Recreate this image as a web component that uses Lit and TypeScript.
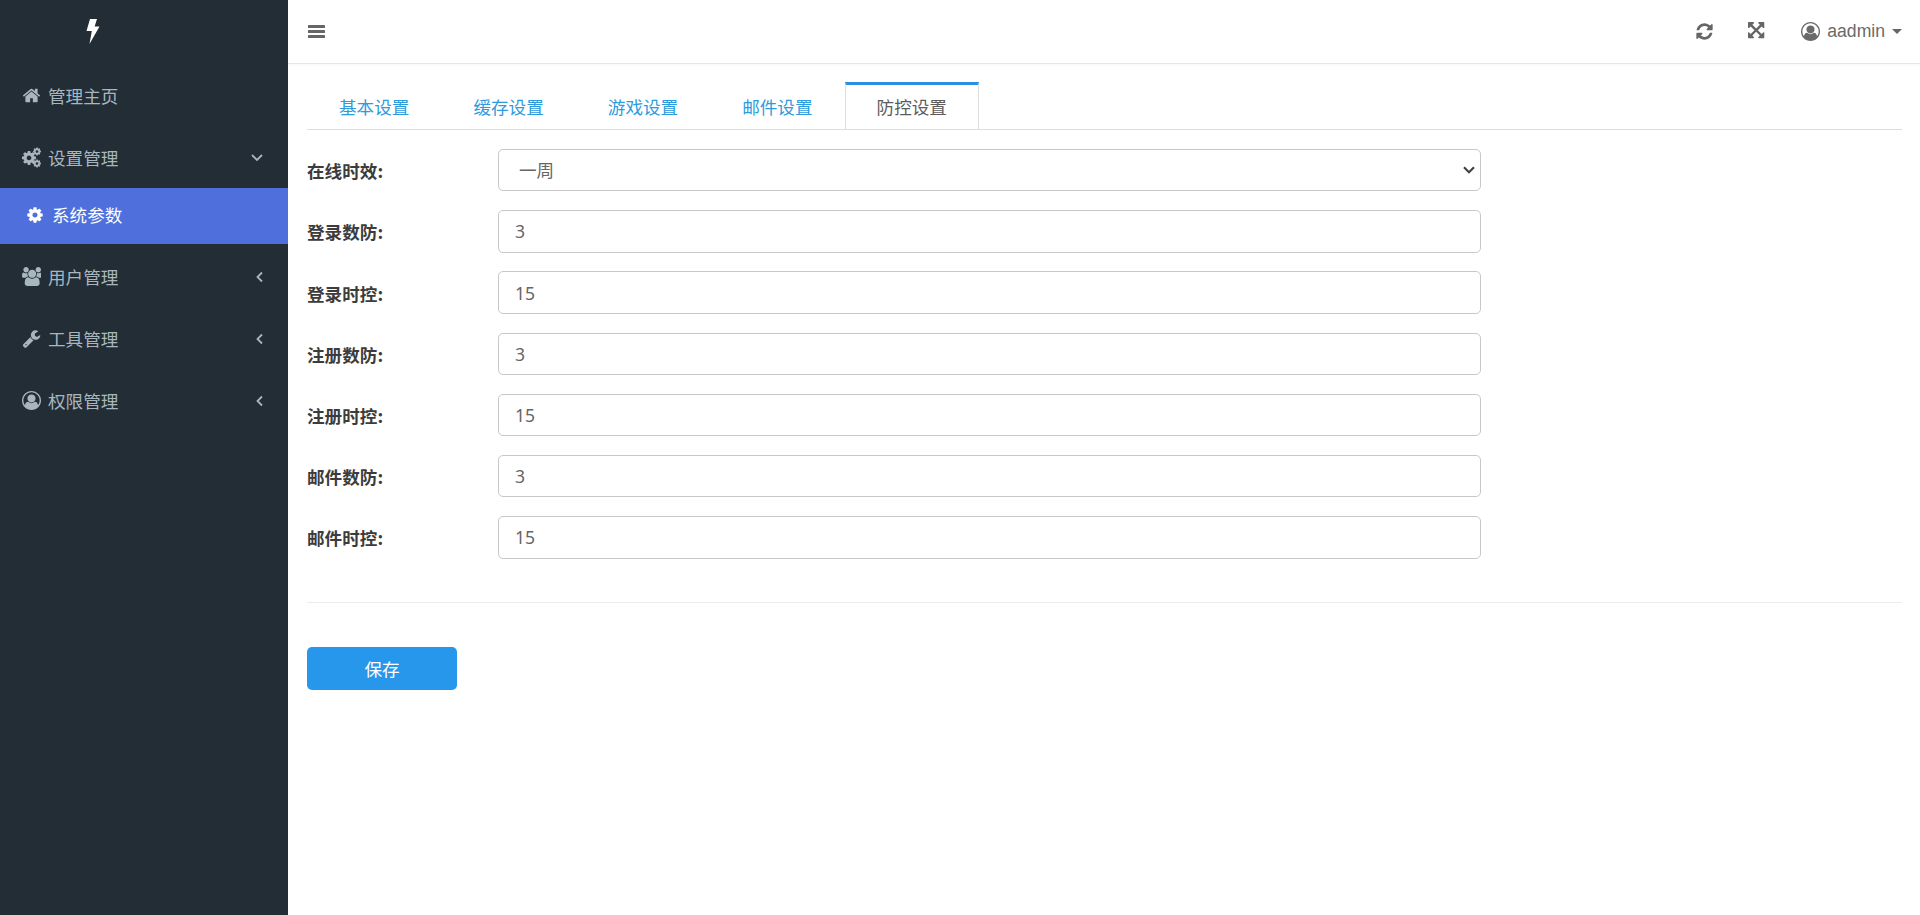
import { LitElement, html, css, svg } from "lit";
import { customElement, state } from "lit/decorators.js";

const P = {
  home: "M1472 992v480q0 26-19 45t-45 19h-384v-384h-256v384h-384q-26 0-45-19t-19-45v-480q0-1 .5-3t.5-3l575-474 575 474q1 2 1 6zm223-69l-62 74q-8 9-21 11h-3q-13 0-21-7l-692-577-692 577q-12 8-24 7-13-2-21-11l-62-74q-8-10-7-23.5t11-21.5l719-599q32-26 76-26t76 26l244 204v-195q0-14 9-23t23-9h192q14 0 23 9t9 23v408l219 182q10 8 11 21.5t-7 23.5z",
  cog: "M1152 896q0-106-75-181t-181-75-181 75-75 181 75 181 181 75 181-75 75-181zm512-109v222q0 12-8 23t-20 13l-185 28q-19 54-39 91 35 50 107 138 10 12 10 25t-9 23q-27 37-99 108t-94 71q-12 0-26-9l-138-108q-44 23-91 38-16 136-29 186-7 28-36 28h-222q-14 0-24.5-8.5t-11.5-21.5l-28-184q-49-16-90-37l-141 107q-10 9-25 9-14 0-25-11-126-114-165-168-7-10-7-23 0-12 8-23 15-21 51-66.5t54-70.5q-27-50-41-99l-183-27q-13-2-21-12.5t-8-23.5v-222q0-12 8-23t19-13l186-28q14-46 39-92-40-57-107-138-10-12-10-24 0-10 9-23 26-36 98.5-107.5t94.5-71.5q13 0 26 10l138 107q44-23 91-38 16-136 29-186 7-28 36-28h222q14 0 24.5 8.5t11.5 21.5l28 184q49 16 90 37l142-107q9-9 24-9 13 0 25 10 129 119 165 170 7 8 7 22 0 12-8 23-15 21-51 66.5t-54 70.5q26 50 41 98l183 28q13 2 21 12.5t8 23.5z",
  users: "M593 896q-162 5-265 128h-134q-82 0-138-40.5t-56-118.5q0-353 124-353 6 0 43.5 21t97.5 42.5 119 21.5q67 0 133-23-5 37-5 66 0 139 81 256zm1071 637q0 120-73 189.5t-194 69.5h-874q-121 0-194-69.5t-73-189.5q0-53 3.5-103.5t14-109 26.5-108.5 43-97.5 62-81 85.5-53.5 111.5-20q10 0 43 21.5t73 48 107 48 135 21.5 135-21.5 107-48 73-48 43-21.5q61 0 111.5 20t85.5 53.5 62 81 43 97.5 26.5 108.5 14 109 3.5 103.5zm-1024-1277q0 106-75 181t-181 75-181-75-75-181 75-181 181-75 181 75 75 181zm704 384q0 159-112.5 271.5t-271.5 112.5-271.5-112.5-112.5-271.5 112.5-271.5 271.5-112.5 271.5 112.5 112.5 271.5zm576 225q0 78-56 118.5t-138 40.5h-134q-103-123-265-128 81-117 81-256 0-29-5-66 66 23 133 23 59 0 119-21.5t97.5-42.5 43.5-21q124 0 124 353zm-128-609q0 106-75 181t-181 75-181-75-75-181 75-181 181-75 181 75 75 181z",
  wrench: "M448 1472q0-26-19-45t-45-19-45 19-19 45 19 45 45 19 45-19 19-45zm644-420l-682 682q-37 37-90 37-52 0-91-37l-106-108q-38-36-38-90 0-53 38-91l681-681q39 98 114.5 173.5t173.5 114.5zm634-435q0 39-23 106-47 134-164.5 217.5t-258.5 83.5q-185 0-316.5-131.5t-131.5-316.5 131.5-316.5 316.5-131.5q58 0 121.5 16.5t107.5 46.5q16 11 16 28t-16 28l-293 169v224l193 107q5-3 79-48.5t135.5-81 70.5-35.5q15 0 23.5 10t8.5 25z",
  user: "M896 0q182 0 348 71t286 191 191 286 71 348q0 181-70.5 347t-190.5 286-286 191.5-349 71.5-349-71-285.5-191.5-190.5-286-71-347.5 71-348 191-286 286-191 348-71zm619 1351q149-205 149-455 0-156-61-298t-164-245-245-164-298-61-298 61-245 164-164 245-61 298q0 250 149 455 66-327 306-327 131 128 313 128t313-128q240 0 306 327zm-235-647q0-159-112.5-271.5t-271.5-112.5-271.5 112.5-112.5 271.5 112.5 271.5 271.5 112.5 271.5-112.5 112.5-271.5z",
  refresh: "M1639 1056q0 5-1 7-64 268-268 434.5t-478 166.5q-146 0-282.5-55t-243.5-157l-129 129q-19 19-45 19t-45-19-19-45v-448q0-26 19-45t45-19h448q26 0 45 19t19 45-19 45l-137 137q71 66 161 102t187 36q134 0 250-65t186-179q11-17 53-117 8-23 30-23h192q13 0 22.5 9.5t9.5 22.5zm25-800v448q0 26-19 45t-45 19h-448q-26 0-45-19t-19-45 19-45l138-138q-148-137-349-137-134 0-250 65t-186 179q-11 17-53 117-8 23-30 23h-199q-13 0-22.5-9.5t-9.5-22.5v-7q65-268 270-434.5t480-166.5q146 0 284 55.5t245 156.5l130-129q19-19 45-19t45 19 19 45z",
  expand: "M1283 413l-355 355 355 355 144-144q29-31 70-14 39 17 39 59v448q0 26-19 45t-45 19h-448q-42 0-59-40-17-39 14-69l144-144-355-355-355 355 144 144q31 30 14 69-17 40-59 40h-448q-26 0-45-19t-19-45v-448q0-42 40-59 39-17 69 14l144 144 355-355-355-355-144 144q-19 19-45 19-12 0-24-5-40-17-40-59v-448q0-26 19-45t45-19h448q42 0 59 40 17 39-14 69l-144 144 355 355 355-355-144-144q-31-30-14-69 17-40 59-40h448q26 0 45 19t19 45v448q0 42-39 59-13 5-25 5-26 0-45-19z",
};

const icon = (d: string, cls = "ic") =>
  html`<svg class=${cls} viewBox="0 0 1792 1792" fill="currentColor"><path d=${d}></path></svg>`;

const cogs = html`<svg class="ic" viewBox="0 0 1792 1792" fill="currentColor" overflow="visible">
  ${svg`<path transform="translate(-110 165) scale(.86)" d=${P.cog}></path>
  <path transform="translate(976 -109) scale(.49)" d=${P.cog}></path>
  <path transform="translate(976 1023) scale(.49)" d=${P.cog}></path>`}
</svg>`;

const NAV = [
  { label: "管理主页", icon: icon(P.home), arrow: "" },
  { label: "设置管理", icon: cogs, arrow: "down" },
  { label: "系统参数", icon: icon(P.cog), arrow: "", active: true },
  { label: "用户管理", icon: icon(P.users), arrow: "left" },
  { label: "工具管理", icon: icon(P.wrench), arrow: "left" },
  { label: "权限管理", icon: icon(P.user), arrow: "left" },
];

const TABS = ["基本设置", "缓存设置", "游戏设置", "邮件设置", "防控设置"];
const FIELDS = [
  ["登录数防", "3"],
  ["登录时控", "15"],
  ["注册数防", "3"],
  ["注册时控", "15"],
  ["邮件数防", "3"],
  ["邮件时控", "15"],
];

@customElement("app-root")
export class AppRoot extends LitElement {
  @state() tab = 4;

  static styles = css`
    :host {
      display: flex;
      min-height: 915px;
      font-family: "Noto Sans CJK SC", "Liberation Sans", sans-serif;
      font-size: 17.6px;
      color: #505050;
      background: #fff;
    }
    .side {
      flex: 0 0 288px;
      background: #222d35;
      color: #a8b6bf;
    }
    .logo {
      height: 64px;
      display: flex;
      align-items: center;
      padding-left: 85px;
      color: #fff;
    }
    .logo svg { width: 15px; height: 25px; margin-top: -1px; }
    .nav {
      display: flex;
      align-items: center;
      height: 62px;
      padding: 1px 0 0 22px;
      box-sizing: border-box;
    }
    .nav .ic { width: 19px; height: 19px; margin-right: 7px; flex: none; }
    .nav .lb { flex: 1; line-height: 1; }
    .nav svg.ar { width: 10px; height: 12px; fill: none; stroke: currentColor; stroke-width: 1.8; flex: none; margin-right: 23px; }
    .nav svg.ar.down { width: 14px; height: 10px; margin-right: 24px; }
    .nav.active {
      height: 56px;
      padding: 0 0 2px 26px;
      background: #4e6fdc;
      color: #fff;
      margin-bottom: 1px;
    }
    .nav.active .ic { width: 18px; height: 18px; margin-right: 8px; }
    .main { flex: 1; min-width: 0; }
    .top {
      height: 63px;
      border-bottom: 1px solid #e6e6e6;
      display: flex;
      align-items: center;
      padding: 0 18px 0 20px;
      color: #666;
      box-shadow: 0 1px 2px rgba(0, 0, 0, 0.03);
    }
    .top .bars { width: 17px; height: 17px; margin-right: auto; }
    .top .ic { width: 19px; height: 19px; }
    .top .act { margin-right: 34px; display: flex; }
    .user { display: flex; align-items: center; color: #6a6a6a; font-family: "Liberation Sans", sans-serif; font-size: 17.6px; }
    .user .ic { margin-right: 7px; }
    .caret { width: 0; height: 0; border: 5.5px solid transparent; border-top-color: #666; border-bottom: 0; margin-left: 7px; }
    .content { padding: 18px 18px 0 19px; }
    .tabs { display: flex; border-bottom: 1px solid #dedede; height: 47px; box-sizing: content-box; }
    .tab {
      width: 134.4px;
      box-sizing: border-box;
      display: flex;
      align-items: center;
      justify-content: center;
      color: #2d9bdc;
      padding-bottom: 1px;
      padding-top: 2px;
    }
    .tab.on {
      color: #5c5c5c;
      border: 1px solid #dedede;
      border-top: 3px solid #2b90e0;
      border-bottom: 0;
      padding-top: 0;
      background: #fff;
    }
    form { display: block; padding-top: 19px; }
    .row { display: flex; align-items: center; height: 42.4px; margin-bottom: 18.8px; }
    .row label { flex: 0 0 191px; font-weight: 700; color: #3c3c3c; padding-top: 1px; }
    .row.first label { padding-top: 0; }
    .ctl {
      width: 983px;
      height: 42.4px;
      box-sizing: border-box;
      border: 1px solid #c8c8c8;
      border-radius: 5px;
      background: #fff;
      color: #666;
      padding: 0 16px;
      font: inherit;
      font-family: "Noto Sans", "Noto Sans CJK SC", sans-serif;
      outline: none;
    }
    select.ctl {
      font-family: "Noto Sans CJK SC", sans-serif;
      appearance: none;
      padding: 0 16px 2px 20px;
      background: #fff url("data:image/svg+xml,%3Csvg xmlns='http://www.w3.org/2000/svg' width='12' height='8'%3E%3Cpath d='M1 1.2l5 5 5-5' fill='none' stroke='%23444' stroke-width='2.2'/%3E%3C/svg%3E") no-repeat right 5px center;
    }
    hr { border: 0; border-top: 1px solid #ececec; margin: 43px 0 44px; }
    .save {
      display: block;
      width: 150px;
      height: 43px;
      border: 0;
      border-radius: 5px;
      background: #2797ec;
      color: #fff;
      font: inherit;
      padding: 0;
    }
  `;

  render() {
    return html`
      <aside class="side">
        <div class="logo">
          <svg viewBox="0 0 15 25" fill="currentColor"><path d="M5 0H12L9.6 7.5H14.5L4.5 25 6.8 12H1.5Z"></path></svg>
        </div>
        ${NAV.map(
          (n) => html`<div class="nav ${n.active ? "active" : ""}">
            ${n.icon}<span class="lb">${n.label}</span>
            ${n.arrow === "down"
              ? html`<svg class="ar down" viewBox="0 0 14 10"><path d="M2 2l5 5 5-5"></path></svg>`
              : n.arrow === "left"
              ? html`<svg class="ar" viewBox="0 0 10 12"><path d="M7 1.5L2.5 6 7 10.5"></path></svg>`
              : ""}
          </div>`
        )}
      </aside>
      <div class="main">
        <header class="top">
          <svg class="bars" viewBox="0 0 17 17" fill="currentColor"><rect y="2" width="17" height="3" rx=".6"></rect><rect y="7" width="17" height="3" rx=".6"></rect><rect y="12" width="17" height="3" rx=".6"></rect></svg>
          <span class="act">${icon(P.refresh)}</span>
          <span class="act">${icon(P.expand)}</span>
          <span class="user">${icon(P.user)}aadmin<span class="caret"></span></span>
        </header>
        <section class="content">
          <nav class="tabs">
            ${TABS.map((t, i) => html`<div class="tab ${i === this.tab ? "on" : ""}">${t}</div>`)}
          </nav>
          <form>
            <div class="row first">
              <label>在线时效:</label>
              <select class="ctl"><option>一周</option></select>
            </div>
            ${FIELDS.map(
              ([l, v]) => html`<div class="row"><label>${l}:</label><input class="ctl" .value=${v} /></div>`
            )}
            <hr />
            <button class="save" type="button">保存</button>
          </form>
        </section>
      </div>
    `;
  }
}
